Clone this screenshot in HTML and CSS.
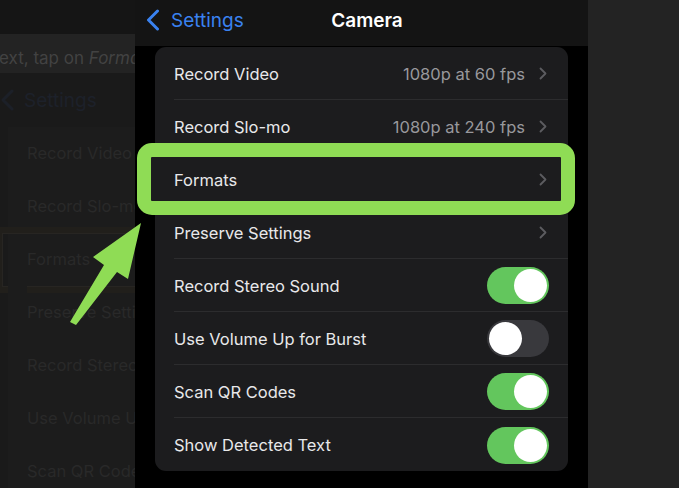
FILE: index.html
```html
<!DOCTYPE html>
<html lang="en">
<head>
  <meta charset="UTF-8">
  <title>Camera Settings</title>
  <link rel="stylesheet" href="styles.css">
</head>
<body>
  <div class="screen">
    <!-- dimmed copy of the previous step -->
    <div class="ghost">
      <div class="ghost-top"></div>
      <div class="ghost-hint">ext, tap on <em>Formats</em></div>
      <div class="ghost-nav">
        <svg class="ghost-back" width="13" height="22" viewBox="0 0 13 22"><path d="M11 2 L2 11 L11 20" fill="none" stroke="#1c2028" stroke-width="3" stroke-linecap="round" stroke-linejoin="round"/></svg>
        <span>Settings</span>
      </div>
      <div class="ghost-list">
        <div class="ghost-row">Record Video</div>
        <div class="ghost-row">Record Slo-mo</div>
        <div class="ghost-row ghost-mark">Formats</div>
        <div class="ghost-row">Preserve Settings</div>
        <div class="ghost-row">Record Stereo Sound</div>
        <div class="ghost-row">Use Volume Up for Burst</div>
        <div class="ghost-row">Scan QR Codes</div>
      </div>
    </div>

    <div class="phone">
      <div class="navbar">
        <div class="back">
          <svg width="14" height="22" viewBox="0 0 14 22"><path d="M11.5 2 L2.5 11 L11.5 20" fill="none" stroke="#3a82f0" stroke-width="3" stroke-linecap="round" stroke-linejoin="round"/></svg>
          <span>Settings</span>
        </div>
        <div class="title">Camera</div>
        <div></div>
      </div>

      <div class="content">
        <div class="group">
          <div class="row">
            <div class="row-inner">
              <span class="label">Record Video</span>
              <span class="value">1080p at 60 fps</span>
              <svg class="chev" width="8" height="13" viewBox="0 0 8 13"><path d="M1.5 1.5 L6.5 6.5 L1.5 11.5" fill="none" stroke="#5c5c60" stroke-width="1.8" stroke-linecap="round" stroke-linejoin="round"/></svg>
            </div>
          </div>
          <div class="row">
            <div class="row-inner">
              <span class="label">Record Slo-mo</span>
              <span class="value">1080p at 240 fps</span>
              <svg class="chev" width="8" height="13" viewBox="0 0 8 13"><path d="M1.5 1.5 L6.5 6.5 L1.5 11.5" fill="none" stroke="#5c5c60" stroke-width="1.8" stroke-linecap="round" stroke-linejoin="round"/></svg>
            </div>
          </div>
          <div class="row highlight">
            <div class="row-inner">
              <span class="label">Formats</span>
              <svg class="chev" width="8" height="13" viewBox="0 0 8 13"><path d="M1.5 1.5 L6.5 6.5 L1.5 11.5" fill="none" stroke="#5c5c60" stroke-width="1.8" stroke-linecap="round" stroke-linejoin="round"/></svg>
            </div>
          </div>
          <div class="row">
            <div class="row-inner">
              <span class="label">Preserve Settings</span>
              <svg class="chev" width="8" height="13" viewBox="0 0 8 13"><path d="M1.5 1.5 L6.5 6.5 L1.5 11.5" fill="none" stroke="#5c5c60" stroke-width="1.8" stroke-linecap="round" stroke-linejoin="round"/></svg>
            </div>
          </div>
          <div class="row">
            <div class="row-inner">
              <span class="label">Record Stereo Sound</span>
              <span class="toggle on"><span class="knob"></span></span>
            </div>
          </div>
          <div class="row">
            <div class="row-inner">
              <span class="label">Use Volume Up for Burst</span>
              <span class="toggle"><span class="knob"></span></span>
            </div>
          </div>
          <div class="row">
            <div class="row-inner">
              <span class="label">Scan QR Codes</span>
              <span class="toggle on"><span class="knob"></span></span>
            </div>
          </div>
          <div class="row">
            <div class="row-inner">
              <span class="label">Show Detected Text</span>
              <span class="toggle on"><span class="knob"></span></span>
            </div>
          </div>
        </div>
      </div>
    </div>

    <div class="side"></div>

    <!-- pointer arrow -->
    <svg class="arrow" width="80" height="110" viewBox="0 0 80 110">
      <polygon points="75,5 27,39 38,47 4,104 10,107 51,54 62,61" fill="#8fdc55"/>
    </svg>
  </div>
</body>
</html>
```

FILE: styles.css
```css
/* === BASE === */
body {
  margin: 0;
  background-color: #000;
  font-family: 'Inter', 'Liberation Sans', Arial, sans-serif;
}
.screen {
  position: relative;
  display: flex;
  width: 679px;
  height: 488px;
  overflow: hidden;
}

/* === DIMMED LEFT COPY === */
.ghost {
  flex: 0 0 135px;
  background-color: #1a1a1a;
  overflow: hidden;
  white-space: nowrap;
}
.ghost-top {
  height: 34px;
  background-color: #151515;
}
.ghost-hint {
  height: 39px;
  box-sizing: border-box;
  padding-top: 5px;
  line-height: 39px;
  background-color: #232323;
  color: #424242;
  font-size: 17px;
  margin-left: -1px;
  overflow: hidden;
}
.ghost-hint em {
  font-style: italic;
}
.ghost-nav {
  height: 54px;
  display: flex;
  align-items: center;
  gap: 10px;
  padding-left: 1px;
  color: #1d212a;
  font-size: 19px;
}
.ghost-list {
  margin-left: 8px;
  background-color: #1c1c1c;
}
.ghost-row {
  position: relative;
  height: 53px;
  line-height: 53px;
  padding-left: 19px;
  color: #292929;
  font-size: 16.5px;
  box-shadow: inset 19px -1px 0 #1c1c1c, inset 0 -1px 0 #212121;
}
.ghost-mark::before {
  content: '';
  position: absolute;
  left: -12px;
  right: -10px;
  top: -6px;
  bottom: -7px;
  border: 6px solid #211f1b;
  outline: 1px solid #272522;
  outline-offset: -7px;
}

/* === PHONE SCREEN === */
.phone {
  flex: 0 0 453px;
  display: flex;
  flex-direction: column;
  background-color: #000;
}
.navbar {
  height: 46px;
  box-sizing: border-box;
  padding: 0 0 6px 11px;
  display: grid;
  grid-template-columns: 1fr auto 1fr;
  align-items: center;
  background-color: #141414;
}
.back {
  display: flex;
  align-items: center;
  gap: 11px;
  color: #3a82f0;
  font-size: 19px;
}
.title {
  color: #fff;
  font-size: 19px;
  font-weight: 600;
}
.content {
  padding: 1px 20px 0;
}
.group {
  background-color: #1c1c1e;
  border-radius: 11px;
}
.row {
  position: relative;
  height: 53px;
}
.row-inner {
  position: relative;
  z-index: 1;
  height: 53px;
  box-sizing: border-box;
  margin-left: 19px;
  padding: 1px 19px 0 0;
  display: flex;
  align-items: center;
  border-bottom: 1px solid #2c2c2e;
  font-size: 16.5px;
}
.row:last-child .row-inner {
  border-bottom: none;
}
.label {
  flex: 1;
  color: #e8e8ea;
}
.value {
  color: #98989c;
  margin-right: 14px;
}
.chev {
  margin-right: 2px;
}

/* highlight frame around Formats */
.highlight::before {
  content: '';
  position: absolute;
  z-index: 2;
  left: -18px;
  right: -7px;
  top: -10px;
  bottom: -9px;
  border: 14px solid #8fdc55;
  border-radius: 15px;
  background-color: #1c1c1e;
}
.highlight .row-inner {
  z-index: 3;
  border-bottom-color: transparent;
}

/* === SWITCHES === */
.toggle {
  position: relative;
  width: 62px;
  height: 37px;
  border-radius: 19px;
  background-color: #39393d;
}
.toggle.on {
  background-color: #63c65d;
}
.knob {
  position: absolute;
  top: 2px;
  left: 2px;
  width: 33px;
  height: 33px;
  border-radius: 50%;
  background-color: #fff;
}
.toggle.on .knob {
  left: 27px;
}

/* === RIGHT STRIP === */
.side {
  flex: 1;
  background-color: #232323;
}

.arrow {
  position: absolute;
  left: 66px;
  top: 218px;
  z-index: 5;
}
```
